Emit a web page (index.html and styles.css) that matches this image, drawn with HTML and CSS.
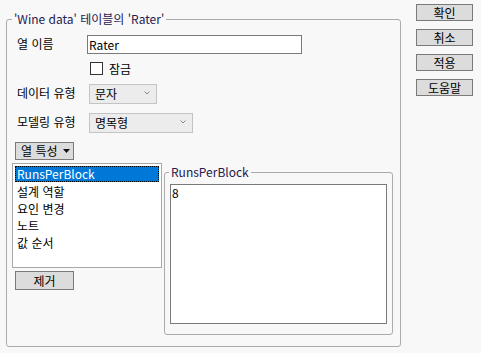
FILE: index.html
```html
<!DOCTYPE html>
<html lang="ko">
<head>
<meta charset="utf-8">
<link rel="stylesheet" href="styles.css">
</head>
<body>
<div class="dialog">
  <fieldset class="outer">
    <legend class="gtitle">'Wine data' 테이블의 'Rater'</legend>
    <div class="row r1">
      <span class="lbl">열 이름</span>
      <div class="textfield">Rater</div>
    </div>
    <div class="row r2">
      <span class="lbl"></span>
      <span class="check"></span><span class="checklbl">잠금</span>
    </div>
    <div class="row r3">
      <span class="lbl">데이터 유형</span>
      <div class="combo w1"><span>문자</span><svg class="chev" width="6" height="4" viewBox="0 0 6 4"><path d="M0.5 0.5 L3 3 L5.5 0.5" fill="none" stroke="#888" stroke-width="1"/></svg></div>
    </div>
    <div class="row r4">
      <span class="lbl">모델링 유형</span>
      <div class="combo w2"><span>명목형</span><svg class="chev" width="6" height="4" viewBox="0 0 6 4"><path d="M0.5 0.5 L3 3 L5.5 0.5" fill="none" stroke="#888" stroke-width="1"/></svg></div>
    </div>
    <div class="bottom">
      <div class="leftcol">
        <div class="btn menubtn"><span>열 특성</span><svg width="7" height="4" viewBox="0 0 7 4"><path d="M0 0 L7 0 L3.5 4 Z" fill="#111"/></svg></div>
        <div class="listbox">
          <div class="item sel">RunsPerBlock</div>
          <div class="item">설계 역할</div>
          <div class="item">요인 변경</div>
          <div class="item">노트</div>
          <div class="item">값 순서</div>
        </div>
        <div class="btn removebtn">제거</div>
      </div>
      <fieldset class="inner">
        <legend class="gtitle">RunsPerBlock</legend>
        <div class="textarea">8</div>
      </fieldset>
    </div>
  </fieldset>
  <div class="buttons">
    <div class="btn side">확인</div>
    <div class="btn side">취소</div>
    <div class="btn side">적용</div>
    <div class="btn side">도움말</div>
  </div>
</div>
</body>
</html>
```

FILE: styles.css
```css
html, body {
  margin: 0;
  padding: 0;
  background: #f8f8f8;
}
body {
  font-family: "Noto Sans CJK KR", "Noto Sans", sans-serif;
  font-size: 12px;
  line-height: 16px;
  color: #000;
  width: 481px;
  height: 353px;
  overflow: hidden;
}
.dialog {
  display: flex;
  align-items: flex-start;
}
fieldset {
  margin: 0;
  border: 1px solid #ababab;
  border-radius: 3px;
  box-sizing: border-box;
  min-width: 0;
}
.gtitle {
  padding: 0 2px;
  color: #1e2050;
  line-height: 16px;
}
.outer {
  margin: 11px 0 0 6px;
  width: 395px;
  height: 336px;
  padding: 8px 0 0 5px;
}
.row {
  display: flex;
  align-items: center;
}
.lbl {
  width: 75px;
  padding-left: 5px;
  box-sizing: border-box;
  flex: none;
  position: relative;
  top: -1px;
}
.r1 { height: 19px; }
.r2 { height: 13px; margin-top: 8px; }
.r3 { height: 20px; margin-top: 9px; }
.r4 { height: 20px; margin-top: 9px; }
.textfield {
  width: 215px;
  height: 19px;
  box-sizing: border-box;
  border: 1px solid #7a7a7a;
  background: #fff;
  padding-left: 1px;
  line-height: 17px;
}
.check {
  width: 13px;
  height: 13px;
  box-sizing: border-box;
  border: 1px solid #333;
  background: #fff;
  margin-left: 3px;
}
.checklbl {
  margin-left: 6px;
}
.combo {
  margin-left: 2px;
  height: 20px;
  box-sizing: border-box;
  border: 1px solid #c4c4c4;
  background: #ececec;
  display: flex;
  align-items: center;
  justify-content: space-between;
  padding: 0 6px 0 5px;
}
.combo.w1 { width: 68px; }
.combo.w2 { width: 104px; }
.chev { display: block; margin-top: -2px; }
.bottom {
  display: flex;
  align-items: flex-start;
  margin-top: 9px;
}
.leftcol {
  width: 150px;
  flex: none;
  display: flex;
  flex-direction: column;
}
.btn {
  box-sizing: border-box;
  border: 1px solid #7a7a7a;
  background: #dcdcdc;
  text-align: center;
}
.menubtn {
  margin-left: 3px;
  width: 59px;
  height: 18px;
  display: flex;
  align-items: center;
  justify-content: space-between;
  padding: 0 3px 0 5px;
  line-height: 16px;
}
.listbox {
  margin-top: 3px;
  height: 105px;
  box-sizing: border-box;
  border: 1px solid #a8a8a8;
  background: #fff;
  padding: 2px;
}
.item {
  height: 17px;
  line-height: 17px;
  padding-left: 2px;
}
.item.sel {
  background: #0078d7;
  color: #fff;
  outline: 1px dotted #000;
  outline-offset: -1px;
  height: 16px;
  line-height: 16px;
  margin-bottom: 1px;
}
.removebtn {
  margin-left: 3px;
  margin-top: 3px;
  width: 59px;
  height: 19px;
  line-height: 17px;
}
.inner {
  margin: 22px 0 0 2px;
  width: 229px;
  height: 171px;
  padding: 4px 0 0 5px;
}
.inner .gtitle {
  margin-left: -1px;
}
.textarea {
  width: 217px;
  height: 140px;
  box-sizing: border-box;
  border: 1px solid #7a7a7a;
  background: #fff;
  padding-left: 1px;
  line-height: 16px;
}
.buttons {
  margin: 4px 0 0 15px;
  display: flex;
  flex-direction: column;
  gap: 8px;
}
.side {
  width: 57px;
  height: 17px;
  line-height: 15px;
}
```
